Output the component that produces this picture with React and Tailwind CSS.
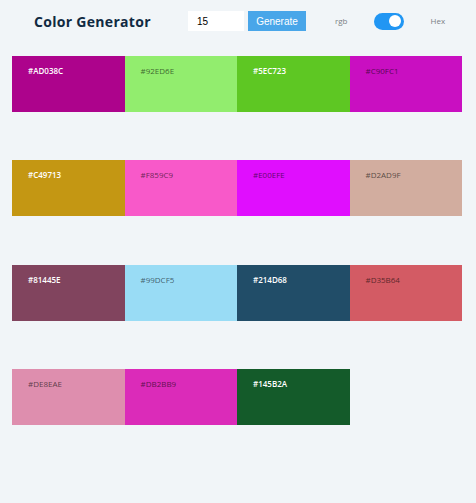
import React, { useState } from 'react';

const colors = [
  { hex: '#AD038C', light: true },
  { hex: '#92ED6E', light: false },
  { hex: '#5EC723', light: true },
  { hex: '#C90FC1', light: false },
  { hex: '#C49713', light: true },
  { hex: '#F859C9', light: false },
  { hex: '#E00EFE', light: false },
  { hex: '#D2AD9F', light: false },
  { hex: '#81445E', light: true },
  { hex: '#99DCF5', light: false },
  { hex: '#214D68', light: true },
  { hex: '#D35B64', light: false },
  { hex: '#DE8EAE', light: false },
  { hex: '#DB2BB9', light: false },
  { hex: '#145B2A', light: true },
];

const App = () => {
  const [count, setCount] = useState('15');
  const [hex, setHex] = useState(true);

  return (
    <div className="min-h-[503px] bg-[#f1f5f8] pb-10" style={{ fontFamily: '"Open Sans", "Noto Sans", sans-serif' }}>
      <header className="flex items-center h-[56px] pb-[14px]">
        <h1 className="ml-[34px] w-[154px] text-[14px] font-bold tracking-[0.3px] text-[#102a42]">Color Generator</h1>
        <input
          value={count}
          onChange={(e) => setCount(e.target.value)}
          className="w-[56px] h-[20px] bg-white pl-[9px] text-[10px] text-black outline-none"
          style={{ fontFamily: '"Liberation Sans", Arial, sans-serif' }}
        />
        <button
          className="ml-[4px] w-[58px] h-[20px] bg-[#49a6e9] text-white text-[10px]"
          style={{ fontFamily: '"Liberation Sans", Arial, sans-serif' }}
        >
          Generate
        </button>
        <span className="ml-[29px] text-[8px] text-[#7a7f85]">rgb</span>
        <button
          onClick={() => setHex(!hex)}
          className={`ml-[26px] w-[30px] h-[17px] rounded-full flex items-center px-[3px] ${hex ? 'bg-[#2196f3] justify-end' : 'bg-gray-300 justify-start'}`}
        >
          <span className="block w-[12px] h-[12px] rounded-full bg-white" />
        </button>
        <span className="ml-[27px] text-[8px] text-[#7a7f85]">Hex</span>
      </header>
      <section className="mx-[12px] w-[450px] grid grid-cols-4 gap-y-[48.4px]">
        {colors.map((c) => (
          <article
            key={c.hex}
            className="h-[56px] pl-[16px] pt-[9px]"
            style={{ backgroundColor: c.hex }}
          >
            <p className={`text-[8px] leading-[11px] ${c.light ? 'text-white font-semibold' : 'text-black/60'}`}>{c.hex}</p>
          </article>
        ))}
      </section>
    </div>
  );
};

export default App;
